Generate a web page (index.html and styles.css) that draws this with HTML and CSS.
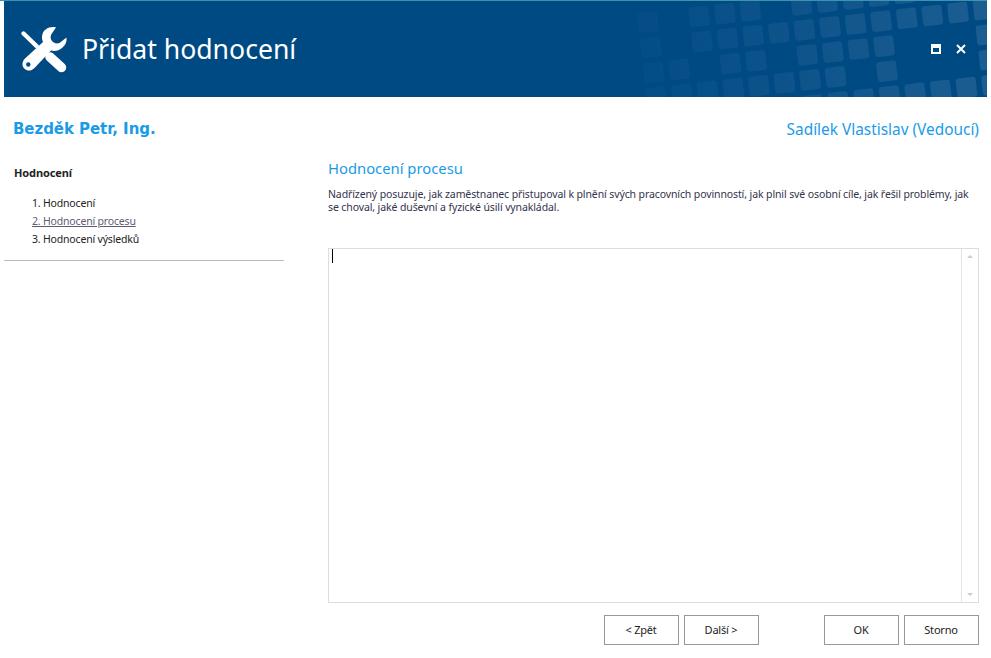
FILE: index.html
```html
<!DOCTYPE html>
<html lang="cs">
  <head>
    <meta charset="UTF-8" />
    <meta name="viewport" content="width=device-width, initial-scale=1.0" />
    <title>Přidat hodnocení</title>
    <link rel="stylesheet" href="styles.css">
  </head>
  <body>
    <div class="window">
      <header class="banner">
        <svg class="banner-pattern" viewBox="0 0 983 96" width="983" height="96" aria-hidden="true">
          <defs>
            <linearGradient id="tileFade" gradientUnits="userSpaceOnUse" x1="-210" y1="0" x2="150" y2="0">
              <stop offset="0" stop-color="#fff" stop-opacity="0.01" />
              <stop offset="1" stop-color="#fff" stop-opacity="0.105" />
            </linearGradient>
          </defs>
          <g fill="url(#tileFade)" transform="translate(826 26) rotate(-6.46)">
            <rect class="tile" x="-190.3" y="-35.2" /><rect class="tile" x="-138.8" y="-35.2" /><rect class="tile" x="-113" y="-35.2" /><rect class="tile" x="-87.3" y="-35.2" /><rect class="tile" x="-35.8" y="-35.2" /><rect class="tile" x="-10" y="-35.2" /><rect class="tile" x="15.8" y="-35.2" /><rect class="tile" x="41.5" y="-35.2" /><rect class="tile" x="67.3" y="-35.2" />
            <rect class="tile" x="-190.3" y="-10" /><rect class="tile" x="-138.8" y="-10" /><rect class="tile" x="-113" y="-10" /><rect class="tile" x="-87.3" y="-10" /><rect class="tile" x="-61.5" y="-10" /><rect class="tile" x="-35.8" y="-10" /><rect class="tile" x="-10" y="-10" /><rect class="tile" x="15.8" y="-10" /><rect class="tile" x="41.5" y="-10" /><rect class="tile" x="67.3" y="-10" /><rect class="tile" x="93" y="-10" /><rect class="tile" x="118.8" y="-10" /><rect class="tile" x="144.6" y="-10" />
            <rect class="tile" x="-190.3" y="15.2" /><rect class="tile" x="-164.6" y="15.2" /><rect class="tile" x="-113" y="15.2" /><rect class="tile" x="-87.3" y="15.2" /><rect class="tile" x="-35.8" y="15.2" /><rect class="tile" x="-10" y="15.2" /><rect class="tile" x="15.8" y="15.2" /><rect class="tile" x="41.5" y="15.2" /><rect class="tile" x="144.6" y="15.2" />
            <rect class="tile" x="-190.3" y="40.3" /><rect class="tile" x="-164.6" y="40.3" /><rect class="tile" x="-138.8" y="40.3" /><rect class="tile" x="-113" y="40.3" /><rect class="tile" x="-87.3" y="40.3" /><rect class="tile" x="-61.5" y="40.3" /><rect class="tile" x="-35.8" y="40.3" /><rect class="tile" x="-10" y="40.3" /><rect class="tile" x="41.5" y="40.3" /><rect class="tile" x="144.6" y="40.3" />
            <rect class="tile" x="-35.8" y="65.5" /><rect class="tile" x="-10" y="65.5" /><rect class="tile" x="15.8" y="65.5" /><rect class="tile" x="41.5" y="65.5" /><rect class="tile" x="67.3" y="65.5" /><rect class="tile" x="93" y="65.5" /><rect class="tile" x="118.8" y="65.5" /><rect class="tile" x="144.6" y="65.5" />
          </g>
        </svg>
        <svg class="banner-icon" viewBox="0 0 48 48" width="48" height="48" aria-hidden="true">
          <path class="tool-fill" fill-rule="evenodd" d="M36 2.5C30 1 24 4 22.5 9C21.5 12 22 15 23 17L5 33.5C1.5 37 2 41.5 4.5 43.8C7.5 46.5 11.5 46 14.5 43L31 25.5C35 26.5 39 25.5 42 23C45.5 20 47 16.5 46.5 12.5L39.5 18C37 19 34.5 18.5 32.5 16.5C30 14 30.5 11 31.5 9ZM10.5 39.5a2.2 2.2 0 1 1-4.4 0a2.2 2.2 0 1 1 4.4 0Z" />
          <path class="tool-blade" d="M3.5 8.5L17 21.5" />
          <path class="tool-grip" d="M30 32L41.5 42.5" />
        </svg>
        <h1 class="banner-title">Přidat hodnocení</h1>
        <div class="window-buttons">
          <span class="btn-maximize"></span>
          <svg class="btn-close" viewBox="0 0 10 10" width="10" height="10" aria-hidden="true">
            <path d="M1 1L9 9M9 1L1 9" />
          </svg>
        </div>
      </header>

      <div class="people">
        <span class="person-name">Bezděk Petr, Ing.</span>
        <span class="person-role">Sadílek Vlastislav (Vedoucí)</span>
      </div>

      <div class="content">
        <aside class="sidebar">
          <h3 class="sidebar-title">Hodnocení</h3>
          <ol class="steps">
            <li>1. Hodnocení</li>
            <li class="current">2. Hodnocení procesu</li>
            <li>3. Hodnocení výsledků</li>
          </ol>
        </aside>

        <main class="main">
          <h2 class="main-title">Hodnocení procesu</h2>
          <p class="main-text">Nadřízený posuzuje, jak zaměstnanec přistupoval k plnění svých pracovních povinností, jak plnil své osobní cíle, jak řešil problémy, jak se choval, jaké duševní a fyzické úsilí vynakládal.</p>
          <div class="editor">
            <div class="editor-area"><span class="caret"></span></div>
            <div class="scrollbar">
              <span class="arrow-up"></span>
              <span class="arrow-down"></span>
            </div>
          </div>
          <div class="actions">
            <div class="action-group">
              <button class="action" type="button">&lt; Zpět</button>
              <button class="action" type="button">Další &gt;</button>
            </div>
            <div class="action-group">
              <button class="action" type="button">OK</button>
              <button class="action" type="button">Storno</button>
            </div>
          </div>
        </main>
      </div>
    </div>
  </body>
</html>
```
FILE: styles.css
```css
body {
  margin: 0;
  background-color: #fff;
  color: #222;
  font-family: "Noto Sans", "DejaVu Sans", sans-serif;
  font-size: 10.5px;
  letter-spacing: -0.18px;
}
.window {
  width: 987px;
  height: 658px;
  display: flex;
  flex-direction: column;
  border-top: 1px solid #3a96ac;
  box-sizing: border-box;
  overflow: hidden;
}
.banner {
  position: relative;
  margin-left: 4px;
  height: 96px;
  flex: none;
  display: flex;
  align-items: center;
  padding-left: 16px;
  padding-right: 21px;
  background-color: #004a84;
  color: #fff;
  overflow: hidden;
}
.banner-pattern {
  position: absolute;
  left: 0;
  top: 0;
}
.tile {
  width: 20px;
  height: 20px;
  rx: 3px;
}
.banner-icon {
  position: relative;
  flex: none;
}
.tool-fill {
  fill: #fff;
}
.tool-blade {
  fill: none;
  stroke: #fff;
  stroke-width: 4.4;
  stroke-linecap: round;
}
.tool-grip {
  fill: none;
  stroke: #fff;
  stroke-width: 9.5;
  stroke-linecap: round;
}
.banner-title {
  position: relative;
  margin: 0 0 0 14px;
  font-size: 26.6px;
  font-weight: 400;
  letter-spacing: 0;
  flex: 1;
}
.window-buttons {
  position: relative;
  display: flex;
  align-items: center;
  gap: 15px;
}
.btn-maximize {
  display: block;
  width: 6px;
  height: 4px;
  border: 2px solid #fff;
  border-top-width: 4px;
}
.btn-close {
  display: block;
}
.btn-close path {
  fill: none;
  stroke: #fff;
  stroke-width: 2;
}
.people {
  display: flex;
  justify-content: space-between;
  align-items: center;
  height: 62px;
  flex: none;
  box-sizing: border-box;
  padding: 2px 8px 0 13px;
  letter-spacing: 0;
}
.person-name {
  font-family: "DejaVu Sans", sans-serif;
  font-size: 15px;
  font-weight: 700;
  letter-spacing: -0.06px;
  color: #1a9be8;
}
.person-role {
  font-size: 15.4px;
  color: #1a9be8;
}
.content {
  display: flex;
  flex: 1;
  min-height: 0;
  padding-left: 4px;
}
.sidebar {
  width: 280px;
  height: 101px;
  flex: none;
  box-sizing: content-box;
  border-bottom: 1px solid #bbb;
}
.sidebar-title {
  margin: 7px 0 0;
  padding-left: 10px;
  font-size: 11px;
  font-weight: 700;
  letter-spacing: -0.1px;
  line-height: 14px;
}
.steps {
  margin: 14px 0 0;
  padding: 0 0 0 28px;
  list-style: none;
}
.steps li {
  line-height: 18px;
}
.steps .current {
  color: #5d5d75;
  text-decoration: underline;
}
.main {
  flex: 1;
  margin-left: 44px;
  margin-right: 8px;
  display: flex;
  flex-direction: column;
  min-width: 0;
}
.main-title {
  margin: 0;
  font-size: 14.8px;
  font-weight: 400;
  letter-spacing: 0;
  line-height: 18px;
  color: #1a9be8;
}
.main-text {
  margin: 11px 0 0;
  line-height: 13px;
  color: #33334d;
  letter-spacing: -0.11px;
  width: 642px;
}
.editor {
  display: flex;
  margin-top: 34px;
  height: 355px;
  border: 1px solid #ddd;
  box-sizing: border-box;
}
.editor-area {
  flex: 1;
  padding: 0 3px;
}
.caret {
  display: block;
  width: 1px;
  height: 14px;
  background-color: #000;
}
.scrollbar {
  width: 16px;
  border-left: 1px solid #e4e4e4;
  display: flex;
  flex-direction: column;
  justify-content: space-between;
  align-items: center;
  padding: 6px 0;
}
.arrow-up,
.arrow-down {
  width: 0;
  height: 0;
  border-left: 3px solid transparent;
  border-right: 3px solid transparent;
}
.arrow-up {
  border-bottom: 3px solid #ccc;
}
.arrow-down {
  border-top: 3px solid #ccc;
}
.actions {
  display: flex;
  justify-content: space-between;
  margin-top: 12px;
  padding-left: 276px;
}
.action-group {
  display: flex;
  gap: 5px;
}
.action {
  width: 75px;
  height: 30px;
  padding: 0 1px 1px 0;
  border: 1px solid #999;
  background-color: #fff;
  color: #222;
  font-family: inherit;
  font-size: 11px;
  letter-spacing: -0.2px;
}
```
